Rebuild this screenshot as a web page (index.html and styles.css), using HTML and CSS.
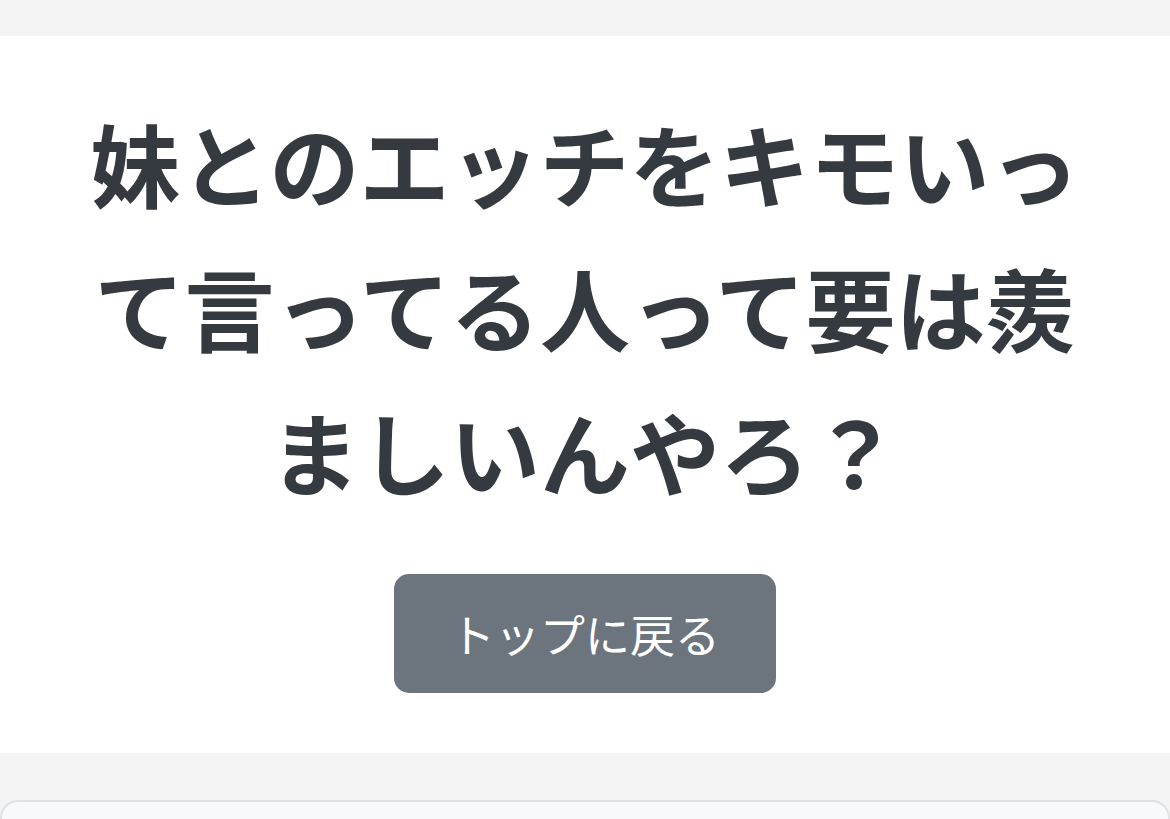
FILE: index.html
```html
<!DOCTYPE html>
<html lang="ja">
<head>
<meta charset="utf-8">
<title>妹とのエッチをキモいって言ってる人って要は羨ましいんやろ？</title>
<link rel="stylesheet" href="styles.css">
</head>
<body>
<div class="topbar"></div>
<main class="panel">
  <h1 class="title">妹とのエッチをキモいって言ってる人って要は羨ましいんやろ？</h1>
  <a class="btn" href="#">トップに戻る</a>
</main>
<section class="card"></section>
</body>
</html>
```
FILE: styles.css
```css
html, body {
  margin: 0;
  padding: 0;
  background: #f4f4f4;
  font-family: "Noto Sans CJK JP", "Noto Sans", sans-serif;
}
.topbar {
  height: 36px;
}
.panel {
  background: #ffffff;
  padding: 54px 0 60px;
  display: flex;
  flex-direction: column;
  align-items: center;
}
.title {
  margin: 0;
  width: 1040px;
  text-align: center;
  font-size: 90px;
  line-height: 144px;
  font-weight: 700;
  color: #343a40;
}
.btn {
  margin-top: 52px;
  display: block;
  background: #6c757d;
  color: #ffffff;
  text-decoration: none;
  font-size: 45px;
  line-height: 67.5px;
  padding: 25.75px 56px;
  border-radius: 15px;
  font-weight: 400;
}
.card {
  margin-top: 47px;
  height: 60px;
  background: #f8f9fa;
  border: 2px solid #dee2e6;
  border-radius: 18px;
}
```
